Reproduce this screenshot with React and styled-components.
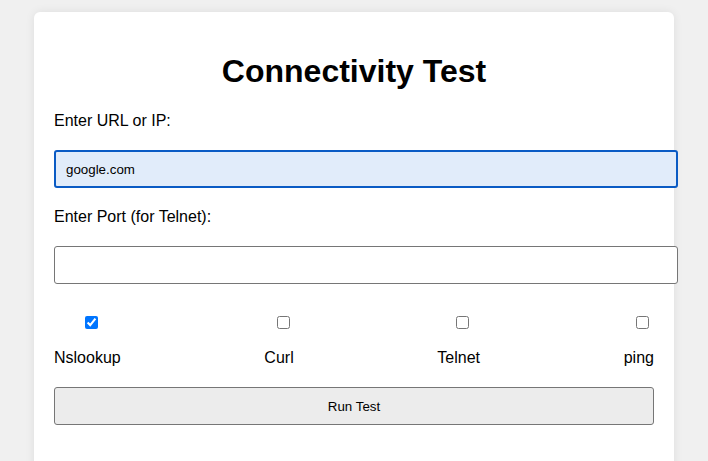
import React, { useState } from "react";
import styled, { createGlobalStyle } from "styled-components";

const Global = createGlobalStyle`
  html, body { margin: 0; padding: 0; }
  body {
    background: #f0f0f0;
    font-family: "Liberation Sans", Arial, sans-serif;
    padding-top: 12px;
  }
`;

const Card = styled.div`
  width: 600px;
  margin: 0 auto;
  padding: 20px 20px 60px;
  background: #ffffff;
  border-radius: 6px;
  box-shadow: 0 0 10px rgba(0, 0, 0, 0.08);
  display: flex;
  flex-direction: column;
`;

const Title = styled.h1`
  font-size: 32px;
  font-weight: bold;
  text-align: center;
  margin: 21.44px 0;
  line-height: 36.8px;
  color: #000;
`;

const FieldLabel = styled.label`
  font-size: 16px;
  line-height: 18.4px;
  color: #000;
  margin-bottom: 20px;
`;

const TextInput = styled.input`
  box-sizing: border-box;
  width: calc(100% + 24px);
  height: 38px;
  margin: 0 0 20px;
  padding: 0 ${(p) => (p.$focused ? 10 : 11)}px;
  font-family: "Liberation Sans", Arial, sans-serif;
  font-size: 13.33px;
  color: #000;
  border-radius: 3px;
  border: ${(p) => (p.$focused ? "2px solid #0a5bc4" : "1px solid #767676")};
  background: ${(p) => (p.$focused ? "#e1ecfa" : "#ffffff")};
  outline: none;
`;

const Options = styled.div`
  display: flex;
  justify-content: space-between;
  margin-top: 9px;
  margin-bottom: 19px;
`;

const Option = styled.label`
  display: flex;
  flex-direction: column;
  align-items: center;
  font-size: 16px;
  line-height: 18.4px;
  color: #000;
`;

const Check = styled.input`
  width: 13px;
  height: 13px;
  margin: 3px 3px 20px 11px;
`;

const RunButton = styled.button`
  width: 100%;
  height: 38.5px;
  font-family: "Liberation Sans", Arial, sans-serif;
  font-size: 13.33px;
  color: #000;
  background: #ececec;
  border: 1px solid #767676;
  border-radius: 3px;
  padding: 0;
`;

export default function App() {
  const [checks, setChecks] = useState({ Nslookup: true, Curl: false, Telnet: false, ping: false });
  return (
    <>
      <Global />
      <Card>
        <Title>Connectivity Test</Title>
        <FieldLabel htmlFor="url">Enter URL or IP:</FieldLabel>
        <TextInput id="url" $focused defaultValue="google.com" />
        <FieldLabel htmlFor="port">Enter Port (for Telnet):</FieldLabel>
        <TextInput id="port" />
        <Options>
          {Object.keys(checks).map((k) => (
            <Option key={k}>
              <Check
                type="checkbox"
                checked={checks[k]}
                onChange={() => setChecks({ ...checks, [k]: !checks[k] })}
              />
              {k}
            </Option>
          ))}
        </Options>
        <RunButton>Run Test</RunButton>
      </Card>
    </>
  );
}
